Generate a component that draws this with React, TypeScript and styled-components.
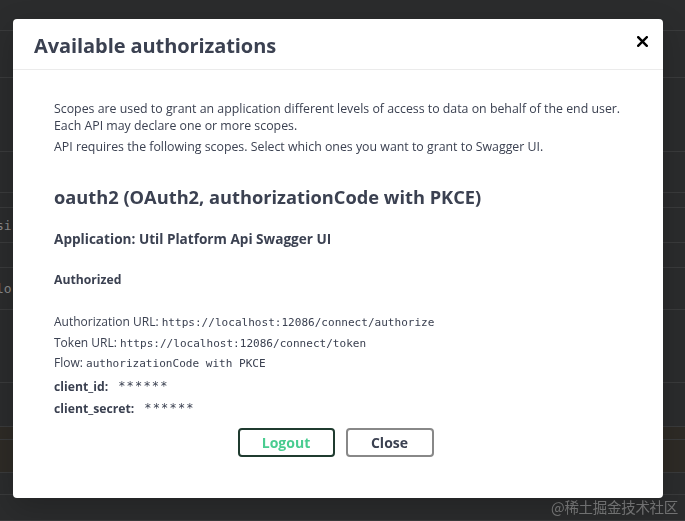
import React from "react";
import styled, { createGlobalStyle } from "styled-components";

const Global = createGlobalStyle`
  html, body { margin: 0; padding: 0; background: #2b2c2d; }
  body { width: 685px; height: 521px; overflow: hidden; font-family: "Open Sans", "Noto Sans", sans-serif; }
`;

const Page = styled.div`
  display: flex;
  flex-direction: column;
  width: 685px;
  height: 521px;
  overflow: hidden;
`;

const PageRow = styled.div<{ $h: number; $bg?: string }>`
  height: ${(p) => p.$h}px;
  flex: none;
  box-sizing: border-box;
  border-bottom: 1px solid #3a3b3c;
  background: ${(p) => p.$bg || "#2b2c2d"};
  display: flex;
  align-items: center;
  font-family: "DejaVu Sans Mono", monospace;
  font-size: 13px;
  color: #8a8a8a;
  text-indent: -4px;
`;

const Overlay = styled.div`
  position: fixed;
  inset: 0;
  display: flex;
  align-items: flex-start;
  padding: 19px 0 0 13px;
`;

const Modal = styled.div`
  width: 650px;
  background: #fff;
  border-radius: 4px;
  box-shadow: 0 10px 30px rgba(0, 0, 0, 0.2);
  color: #3b4151;
`;

const Header = styled.div`
  display: flex;
  align-items: center;
  justify-content: space-between;
  height: 51px;
  box-sizing: border-box;
  padding: 0 14px 0 21px;
  border-bottom: 1px solid #ebebeb;
`;

const Title = styled.h3`
  margin: 0;
  font-size: 20px;
  font-weight: 700;
  letter-spacing: -0.08px;
  color: #3b4151;
  padding-top: 2px;
`;

const CloseIcon = styled.button`
  border: none;
  background: none;
  padding: 0;
  width: 14px;
  height: 14px;
  display: flex;
  align-items: center;
  justify-content: center;
  cursor: pointer;
  margin-top: -5px;
`;

const Content = styled.div`
  padding: 30px 41px 41px 41px;
`;

const Para = styled.p<{ $mt?: number }>`
  margin: ${(p) => p.$mt || 0}px 0 0;
  font-size: 12.35px;
  line-height: 17px;
  color: #3b4151;
`;

const Heading = styled.h4`
  margin: 30px 0 0;
  font-size: 18.25px;
  line-height: 24px;
  font-weight: 700;
  color: #3b4151;
`;

const SubHeading = styled.h6<{ $mt: number; $size: number }>`
  margin: ${(p) => p.$mt}px 0 0;
  font-size: ${(p) => p.$size}px;
  line-height: 18px;
  font-weight: 700;
  color: #3b4151;
`;

const InfoList = styled.div`
  margin-top: 23px;
  display: flex;
  flex-direction: column;
`;

const InfoLine = styled.p`
  margin: 0;
  font-size: 12px;
  line-height: 20.5px;
  height: 20.5px;
  color: #3b4151;
`;

const Code = styled.code`
  font-family: "DejaVu Sans Mono", "Liberation Mono", monospace;
  font-size: 11.05px;
  line-height: 1;
  color: #3b4151;
`;

const CredList = styled.div`
  margin-top: 2px;
  display: flex;
  flex-direction: column;
`;

const CredLine = styled.div`
  display: flex;
  align-items: center;
  gap: 10px;
  height: 22px;
  font-size: 12.2px;
`;

const CredLabel = styled.label`
  font-weight: 700;
  color: #3b4151;
`;

const Masked = styled.code`
  font-family: "DejaVu Sans Mono", monospace;
  font-size: 12px;
  color: #3b4151;
  letter-spacing: 1.2px;
  margin-top: -2px;
`;

const BtnRow = styled.div`
  margin-top: 8px;
  display: flex;
  justify-content: center;
  gap: 11px;
  padding-right: 5px;
`;

const Btn = styled.button<{ $variant: "logout" | "close" }>`
  height: 29px;
  box-sizing: border-box;
  width: ${(p) => (p.$variant === "logout" ? 97 : 88)}px;
  border-radius: 4px;
  border: 2px solid ${(p) => (p.$variant === "logout" ? "#1f3b2f" : "#888")};
  background: #fff;
  color: ${(p) => (p.$variant === "logout" ? "#49cc90" : "#3b4151")};
  font-family: "Open Sans", sans-serif;
  font-size: 14px;
  font-weight: 700;
  padding: 0;
  cursor: pointer;
`;

const Watermark = styled.div`
  position: fixed;
  right: 7px;
  bottom: 4px;
  font-family: "Noto Sans CJK SC", sans-serif;
  font-size: 14.5px;
  color: rgba(200, 200, 200, 0.45);
  letter-spacing: -0.3px;
`;

const rows: { h: number; bg?: string; text?: string }[] = [
  { h: 31 },
  { h: 47 },
  { h: 74 },
  { h: 41 },
  { h: 15 },
  { h: 35, text: "si" },
  { h: 25 },
  { h: 42, text: "lo" },
  { h: 73 },
  { h: 44 },
  { h: 13, bg: "#2e2b26" },
  { h: 33, bg: "#2e2b26" },
  { h: 22 },
  { h: 26 },
];

export default function App() {
  return (
    <>
      <Global />
      <Page>
        {rows.map((r, i) => (
          <PageRow key={i} $h={r.h} $bg={r.bg}>
            {r.text}
          </PageRow>
        ))}
      </Page>
      <Overlay>
        <Modal>
          <Header>
            <Title>Available authorizations</Title>
            <CloseIcon aria-label="close">
              <svg width="11" height="11" viewBox="0 0 11 11">
                <path d="M1.2 1.2 L9.8 9.8 M9.8 1.2 L1.2 9.8" stroke="#000" strokeWidth="2.4" strokeLinecap="square" />
              </svg>
            </CloseIcon>
          </Header>
          <Content>
            <Para>
              Scopes are used to grant an application different levels of access to data on behalf of the end user.
              <br />
              Each API may declare one or more scopes.
            </Para>
            <Para $mt={4}>API requires the following scopes. Select which ones you want to grant to Swagger UI.</Para>
            <Heading>oauth2 (OAuth2, authorizationCode with PKCE)</Heading>
            <SubHeading $mt={21} $size={13.6}>Application: Util Platform Api Swagger UI</SubHeading>
            <SubHeading $mt={23} $size={12.2}>Authorized</SubHeading>
            <InfoList>
              <InfoLine>
                Authorization URL: <Code>https://localhost:12086/connect/authorize</Code>
              </InfoLine>
              <InfoLine>
                Token URL: <Code>https://localhost:12086/connect/token</Code>
              </InfoLine>
              <InfoLine>
                Flow: <Code>authorizationCode with PKCE</Code>
              </InfoLine>
            </InfoList>
            <CredList>
              <CredLine>
                <CredLabel>client_id:</CredLabel>
                <Masked>******</Masked>
              </CredLine>
              <CredLine>
                <CredLabel>client_secret:</CredLabel>
                <Masked>******</Masked>
              </CredLine>
            </CredList>
            <BtnRow>
              <Btn $variant="logout">Logout</Btn>
              <Btn $variant="close">Close</Btn>
            </BtnRow>
          </Content>
        </Modal>
      </Overlay>
      <Watermark>@稀土掘金技术社区</Watermark>
    </>
  );
}
